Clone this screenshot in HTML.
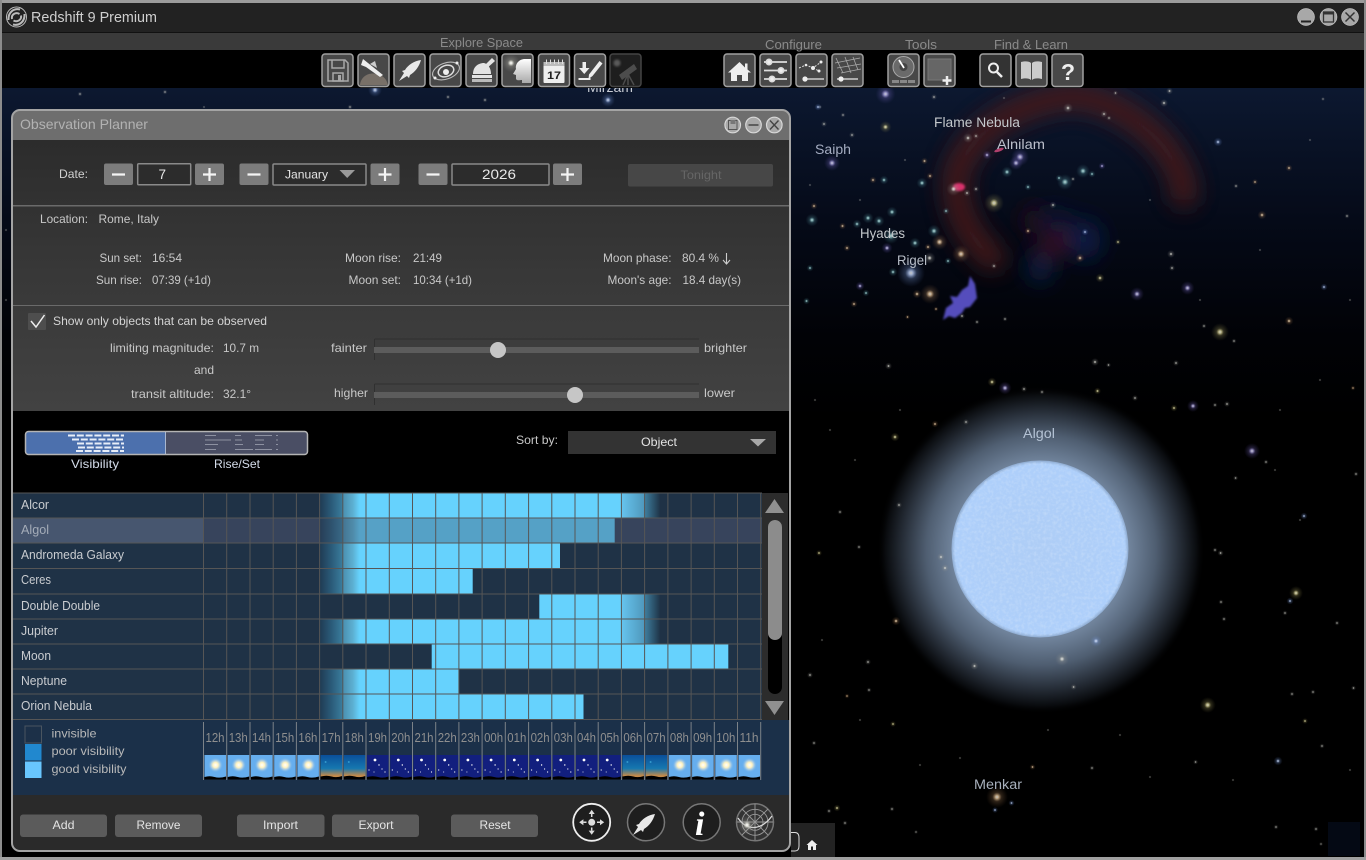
<!DOCTYPE html>
<html lang="en"><head><meta charset="utf-8"><title>Redshift 9 Premium</title>
<style>html,body{margin:0;padding:0;background:#000;width:1366px;height:860px;overflow:hidden}svg{display:block;font-family:"Liberation Sans",sans-serif;font-size:12px;filter:blur(.35px)}</style></head>
<body>
<svg width="1366" height="860" viewBox="0 0 1366 860" xmlns="http://www.w3.org/2000/svg">
<defs>
<linearGradient id="sky" x1="0" y1="88" x2="0" y2="420" gradientUnits="userSpaceOnUse"><stop offset="0" stop-color="#0c1830"/><stop offset=".4" stop-color="#050a18"/><stop offset=".75" stop-color="#010206"/><stop offset="1" stop-color="#000"/></linearGradient>
<linearGradient id="pbody" x1="0" y1="140" x2="0" y2="411" gradientUnits="userSpaceOnUse"><stop offset="0" stop-color="#2c2c2c"/><stop offset=".5" stop-color="#383838"/><stop offset="1" stop-color="#424242"/></linearGradient>
<radialGradient id="w"><stop offset="0" stop-color="#fff"/><stop offset=".14" stop-color="#dcdcd4"/><stop offset=".38" stop-color="#a8a8a0" stop-opacity=".35"/><stop offset="1" stop-color="#888" stop-opacity="0"/></radialGradient>
<radialGradient id="b"><stop offset="0" stop-color="#fff"/><stop offset=".14" stop-color="#c4d8ff"/><stop offset=".42" stop-color="#7f9fdf" stop-opacity=".35"/><stop offset="1" stop-color="#6080c0" stop-opacity="0"/></radialGradient>
<radialGradient id="y"><stop offset="0" stop-color="#fff"/><stop offset=".14" stop-color="#f4eeb0"/><stop offset=".42" stop-color="#a8a060" stop-opacity=".35"/><stop offset="1" stop-color="#807840" stop-opacity="0"/></radialGradient>
<radialGradient id="o"><stop offset="0" stop-color="#fff"/><stop offset=".14" stop-color="#f4d4a8"/><stop offset=".42" stop-color="#a87f58" stop-opacity=".35"/><stop offset="1" stop-color="#805838" stop-opacity="0"/></radialGradient>
<radialGradient id="t"><stop offset="0" stop-color="#f0ffff"/><stop offset=".14" stop-color="#a8e0e0"/><stop offset=".42" stop-color="#5f9fa8" stop-opacity=".35"/><stop offset="1" stop-color="#407880" stop-opacity="0"/></radialGradient>
<radialGradient id="p"><stop offset="0" stop-color="#fff"/><stop offset=".14" stop-color="#c8c0f8"/><stop offset=".42" stop-color="#7f70c8" stop-opacity=".35"/><stop offset="1" stop-color="#6050a8" stop-opacity="0"/></radialGradient>
<radialGradient id="halo" cx="1041" cy="550" r="164" gradientUnits="userSpaceOnUse"><stop offset="0" stop-color="#7a8da6"/><stop offset=".54" stop-color="#70839b"/><stop offset=".7" stop-color="#4f5e71"/><stop offset=".85" stop-color="#252c36"/><stop offset=".95" stop-color="#090b0e"/><stop offset="1" stop-color="#000" stop-opacity="0"/></radialGradient>
<radialGradient id="disc" cx="1040" cy="549" r="88.5" gradientUnits="userSpaceOnUse"><stop offset="0" stop-color="#aecdf6"/><stop offset=".96" stop-color="#aecffa"/><stop offset="1" stop-color="#8fabcf"/></radialGradient>
<filter id="nz" x="0" y="0" width="100%" height="100%"><feTurbulence type="fractalNoise" baseFrequency=".32" numOctaves="2" seed="4"/><feColorMatrix values="0 0 0 0 .62  0 0 0 0 .76  0 0 0 0 .96  0 0 0 2 -.8"/><feComposite in2="SourceAlpha" operator="in"/></filter>
<filter id="b12" x="-30%" y="-30%" width="160%" height="160%"><feGaussianBlur stdDeviation="11"/></filter>
<filter id="b1" x="-20%" y="-20%" width="140%" height="140%"><feGaussianBlur stdDeviation="1"/></filter>
<linearGradient id="fi" x1="319.5" y1="0" x2="366" y2="0" gradientUnits="userSpaceOnUse"><stop offset="0" stop-color="#1f3a52"/><stop offset=".25" stop-color="#2a5a78"/><stop offset=".49" stop-color="#3a7c9c"/><stop offset=".5" stop-color="#4a8eae"/><stop offset=".72" stop-color="#5cb0d2"/><stop offset=".86" stop-color="#66d2fd"/></linearGradient>
<linearGradient id="fo" x1="621.5" y1="0" x2="660" y2="0" gradientUnits="userSpaceOnUse"><stop offset="0" stop-color="#66c4ee"/><stop offset=".59" stop-color="#4f98bc"/><stop offset=".6" stop-color="#3f7f9f"/><stop offset="1" stop-color="#1f3448"/></linearGradient>
<linearGradient id="tdusk" x1="0" y1="0" x2="0" y2="1"><stop offset="0" stop-color="#0a4f9a"/><stop offset=".55" stop-color="#1678b0"/><stop offset=".85" stop-color="#c58a48"/><stop offset="1" stop-color="#c58a48"/></linearGradient>
<linearGradient id="hd" x1="0" y1="0" x2="0" y2="1"><stop offset="0" stop-color="#fff"/><stop offset="1" stop-color="#aaa"/></linearGradient>
<radialGradient id="sun"><stop offset="0" stop-color="#fff"/><stop offset=".35" stop-color="#fff3c0"/><stop offset=".6" stop-color="#dfe3d8" stop-opacity=".6"/><stop offset="1" stop-color="#6ab0ef" stop-opacity="0"/></radialGradient>
<g id="tday"><rect width="21.5" height="24.5" fill="#66aeee"/><circle cx="11" cy="10" r="7.500" fill="url(#sun)"/><path d="M0 22 Q5 20.500 10 22 T21.500 21.500V24.500H0Z" fill="#000"/></g>
<g id="tdusk2"><rect width="21.5" height="24.5" fill="url(#tdusk)"/><circle cx="5" cy="7" r="1" fill="#39c"/><path d="M0 21.500 Q6 20 11 21.500 T21.500 21V24.500H0Z" fill="#000"/></g>
<g id="tnight"><rect width="21.5" height="24.5" fill="#121f7e"/><g fill="#fff"><circle cx="8" cy="5" r="1.400"/><circle cx="12" cy="10" r=".7"/><circle cx="15" cy="14" r=".6"/><circle cx="2" cy="15" r=".6"/><circle cx="7" cy="17" r=".5"/><circle cx="18" cy="17" r=".6"/></g><path d="M0 22 Q6 20.500 11 22 T21.500 21.500V24.500H0Z" fill="#000"/></g>
<clipPath id="pc"><rect x="12" y="110" width="778" height="741" rx="8"/></clipPath>
<g id="rk"><path d="M27 6C20 7 14 11 11 16L8 17 10 19 5 27 13 22 15 24 16 21C21 18 25 13 27 6Z" fill="#e8e8e8"/></g>
</defs>

<!-- sky -->
<rect width="1366" height="860" fill="#000"/>
<rect y="88" width="1366" height="340" fill="url(#sky)"/>
<g fill="none" stroke-linecap="round" opacity=".88">
<path d="M992 258C965 235 955 205 956 180 960 145 1000 108 1065 97 1105 94 1150 125 1170 155 1180 170 1184 185 1184 195" stroke="#481a1c" stroke-width="27" filter="url(#b12)"/>
</g>
<g filter="url(#b12)">
<ellipse cx="1054" cy="245" rx="20" ry="10" fill="#3c0e1a" transform="rotate(-35 1054 245)"/>
<ellipse cx="1032" cy="220" rx="8" ry="14" fill="#2e0c14"/>
<ellipse cx="1040" cy="268" rx="12" ry="14" fill="#0a2048"/>
<ellipse cx="1085" cy="240" rx="16" ry="20" fill="#0a1c46"/>
<ellipse cx="1055" cy="222" rx="18" ry="12" fill="#091536"/>
</g>
<ellipse cx="959" cy="187" rx="6" ry="4" fill="#d8306c" filter="url(#b1)"/>
<ellipse cx="999" cy="150" rx="5" ry="1.600" fill="#b0406c" transform="rotate(-20 999 150)"/>
<path d="M970 276 975 284 977 298 970 307 965 308 962 313 955 318 949 316 943 320 946 308 953 303 950 296 957 297 962 290 968 286Z" fill="#554dbc" filter="url(#b1)"/>

<!-- Algol -->
<circle cx="1041" cy="550" r="164" fill="url(#halo)"/>
<circle cx="1040" cy="549" r="88.500" fill="url(#disc)"/>
<circle cx="1040" cy="549" r="87" fill="#000" filter="url(#nz)" opacity=".5"/>

<!-- stars -->
<g opacity=".78">
<g fill="url(#w)">
<circle cx="968" cy="138" r="5"/><circle cx="976" cy="136" r="3"/><circle cx="1068" cy="108" r="5"/><circle cx="1104" cy="114" r="3.500"/><circle cx="1109" cy="118" r="2.500"/><circle cx="1164" cy="103" r="4"/><circle cx="1236" cy="186" r="2.500"/><circle cx="1347" cy="216" r="2.500"/><circle cx="953.500" cy="189" r="7"/><circle cx="967" cy="193" r="3.500"/><circle cx="976" cy="189" r="3"/><circle cx="929.600" cy="258" r="6"/><circle cx="962" cy="316" r="3"/><circle cx="977" cy="322" r="2.500"/><circle cx="1005" cy="319" r="2.500"/><circle cx="1171" cy="254" r="4"/><circle cx="1172" cy="268" r="3"/><circle cx="1234" cy="341" r="2.500"/><circle cx="1204" cy="326" r="2.500"/><circle cx="843" cy="115" r="2.500"/><circle cx="824" cy="124" r="3"/><circle cx="852" cy="135" r="3"/><circle cx="934" cy="97" r="3"/><circle cx="1115.500" cy="93" r="2.500"/><circle cx="1169.500" cy="91" r="3.500"/><circle cx="1323" cy="99" r="2"/><circle cx="994" cy="266" r="3"/><circle cx="1053" cy="205" r="3.500"/><circle cx="1073" cy="179" r="2.500"/><circle cx="888.500" cy="366" r="3.500"/><circle cx="1095" cy="362" r="4"/><circle cx="1108.500" cy="365" r="2.500"/><circle cx="1176" cy="363" r="3"/><circle cx="1024" cy="389" r="3"/><circle cx="1042" cy="392" r="2.500"/><circle cx="1227" cy="404" r="3"/><circle cx="1215" cy="405" r="2.500"/><circle cx="1135" cy="398" r="3"/><circle cx="966" cy="422" r="3"/><circle cx="1266" cy="462" r="2.500"/><circle cx="1235.600" cy="478" r="2.500"/><circle cx="1356" cy="474" r="2.500"/><circle cx="840" cy="512" r="2.500"/><circle cx="899" cy="505" r="3"/><circle cx="859" cy="547" r="2.500"/><circle cx="941" cy="557" r="4"/><circle cx="945" cy="568" r="4"/><circle cx="1215" cy="550" r="2.500"/><circle cx="1220.600" cy="553" r="3"/><circle cx="1221" cy="602" r="2.500"/><circle cx="1285" cy="613" r="2.500"/><circle cx="1224" cy="619" r="2.500"/><circle cx="1337" cy="623" r="2.500"/><circle cx="1062" cy="659" r="7"/><circle cx="974.500" cy="666" r="4"/><circle cx="1073.600" cy="687" r="3"/><circle cx="810" cy="675" r="3"/><circle cx="868" cy="662" r="3"/><circle cx="869" cy="690" r="2.500"/><circle cx="1292" cy="694" r="2.500"/><circle cx="1313" cy="692" r="2.500"/><circle cx="1353.500" cy="688" r="2.500"/><circle cx="814" cy="743" r="2.500"/><circle cx="1092" cy="768" r="2.500"/><circle cx="1195.600" cy="762" r="2.500"/><circle cx="1322" cy="746" r="2.500"/><circle cx="892" cy="809" r="2.500"/><circle cx="829" cy="811" r="2.500"/><circle cx="845" cy="823" r="2.500"/><circle cx="916" cy="832" r="2"/><circle cx="1276" cy="827" r="2.500"/><circle cx="1316" cy="829" r="2.500"/><circle cx="1321" cy="844" r="2"/>
<circle cx="830" cy="430" r="1.500"/><circle cx="815" cy="400" r="1.500"/><circle cx="855" cy="460" r="1.500"/><circle cx="900" cy="410" r="1.500"/><circle cx="822" cy="640" r="1.500"/><circle cx="860" cy="720" r="1.500"/><circle cx="920" cy="765" r="1.500"/><circle cx="960" cy="758" r="1.500"/><circle cx="1048" cy="730" r="1.500"/><circle cx="1120" cy="735" r="1.500"/><circle cx="1150" cy="777" r="1.500"/><circle cx="1233" cy="780" r="1.500"/><circle cx="1350" cy="770" r="1.500"/><circle cx="1300" cy="520" r="1.500"/><circle cx="1275" cy="470" r="1.500"/><circle cx="1320" cy="380" r="1.500"/><circle cx="1280" cy="410" r="1.500"/><circle cx="1200" cy="300" r="1.500"/><circle cx="1260" cy="250" r="1.500"/><circle cx="1310" cy="140" r="1.500"/><circle cx="1350" cy="300" r="1.500"/><circle cx="1150" cy="200" r="1.500"/><circle cx="810" cy="185" r="1.500"/><circle cx="860" cy="200" r="1.500"/><circle cx="905" cy="160" r="1.500"/><circle cx="6" cy="300" r="1.500"/><circle cx="6" cy="230" r="1.500"/><circle cx="80" cy="94" r="2.500"/><circle cx="165" cy="92" r="2.500"/><circle cx="448" cy="97" r="2.500"/><circle cx="485" cy="100" r="2.500"/><circle cx="350" cy="107" r="2.500"/><circle cx="204" cy="107" r="1.500"/><circle cx="1004" cy="98" r="1.500"/><circle cx="820" cy="107" r="2"/>
</g>
<g fill="url(#b)">
<circle cx="911" cy="273" r="14"/><circle cx="1218" cy="142" r="4.500"/><circle cx="1085" cy="232" r="3.500"/><circle cx="1324" cy="287" r="3.500"/><circle cx="818" cy="107" r="3.500"/><circle cx="1290" cy="601" r="3.500"/><circle cx="1096" cy="641" r="6"/><circle cx="1278" cy="761" r="4.500"/><circle cx="1011.500" cy="803" r="3"/><circle cx="995" cy="810" r="3"/><circle cx="608" cy="100" r="7"/><circle cx="375" cy="90" r="7"/><circle cx="1304" cy="516" r="3.500"/>
</g>
<g fill="url(#y)">
<circle cx="885.500" cy="127" r="6"/><circle cx="994" cy="203" r="10"/><circle cx="1100" cy="278" r="4.500"/><circle cx="1118" cy="242" r="3"/><circle cx="1220" cy="332" r="9"/><circle cx="992" cy="382" r="4.500"/><circle cx="1097.500" cy="391" r="3.500"/><circle cx="1174" cy="408" r="3.500"/><circle cx="895" cy="437" r="4.500"/><circle cx="819" cy="553" r="3"/><circle cx="1296" cy="593" r="7"/><circle cx="1207.700" cy="705" r="8"/><circle cx="1305" cy="721" r="3"/><circle cx="893" cy="724" r="3"/><circle cx="837" cy="808" r="3.500"/>
</g>
<g fill="url(#o)">
<circle cx="1289" cy="168" r="3.500"/><circle cx="1255" cy="182" r="3"/><circle cx="1262" cy="215" r="4.500"/><circle cx="930" cy="176" r="3.500"/><circle cx="924.500" cy="161" r="3.500"/><circle cx="873" cy="180" r="3.500"/><circle cx="814" cy="206" r="3.500"/><circle cx="842.500" cy="226" r="3.500"/><circle cx="939.500" cy="242" r="8"/><circle cx="847" cy="248" r="3.500"/><circle cx="928" cy="247" r="3.500"/><circle cx="961" cy="254" r="9"/><circle cx="917" cy="294" r="4.500"/><circle cx="930" cy="294" r="10"/><circle cx="854" cy="304" r="3.500"/><circle cx="907.500" cy="317" r="2.500"/><circle cx="936" cy="309" r="2.500"/><circle cx="1028" cy="231" r="3.500"/><circle cx="1080" cy="258" r="4.500"/><circle cx="1289" cy="321" r="4.500"/><circle cx="1353" cy="388" r="2.500"/><circle cx="935" cy="424" r="3.500"/><circle cx="896" cy="621" r="4.500"/><circle cx="847" cy="696" r="2.500"/><circle cx="1032.500" cy="767" r="3"/><circle cx="997" cy="797" r="11"/>
</g>
<g fill="url(#t)">
<circle cx="1007" cy="172" r="5.500"/><circle cx="1083" cy="171" r="7"/><circle cx="1065" cy="182" r="8"/><circle cx="1059" cy="178" r="3.500"/><circle cx="1092" cy="174" r="3.500"/><circle cx="922" cy="183" r="5.500"/><circle cx="884" cy="180" r="4.500"/><circle cx="946" cy="211" r="3.500"/><circle cx="892" cy="212" r="5.500"/><circle cx="868" cy="218" r="5.500"/><circle cx="879" cy="221" r="5.500"/><circle cx="857" cy="224" r="4.500"/><circle cx="812" cy="220" r="6.500"/><circle cx="934" cy="231" r="6.500"/><circle cx="891" cy="236" r="8"/><circle cx="915" cy="243" r="5.500"/><circle cx="948" cy="261" r="3.500"/><circle cx="893" cy="272" r="4.500"/><circle cx="810" cy="268" r="3.500"/><circle cx="866" cy="293" r="3.500"/><circle cx="806.500" cy="301" r="3.500"/><circle cx="1028" cy="187" r="3.500"/>
</g>
<g fill="url(#p)">
<circle cx="885.500" cy="94" r="10"/><circle cx="832" cy="163" r="8"/><circle cx="987" cy="155" r="4.500"/><circle cx="1020" cy="157" r="9"/><circle cx="1016" cy="163" r="7"/><circle cx="1102" cy="166" r="3.500"/><circle cx="887" cy="248" r="5.500"/><circle cx="860" cy="286" r="4.500"/><circle cx="1137" cy="294" r="7"/><circle cx="1187.500" cy="288" r="7"/><circle cx="1005" cy="388" r="6.500"/><circle cx="1193" cy="406" r="6"/><circle cx="1252" cy="451" r="8"/>
</g>
</g>

<!-- sky labels -->
<g font-size="13.500" fill="#b8bfca">
<text x="587" y="92" textLength="46" lengthAdjust="spacingAndGlyphs" fill="#c8ccd4">Mirzam</text>
<text x="815" y="154" textLength="36" lengthAdjust="spacingAndGlyphs" fill="#a4acc0">Saiph</text>
<text x="934" y="127" textLength="86" lengthAdjust="spacingAndGlyphs" fill="#c4c8cc">Flame Nebula</text>
<text x="997" y="149" textLength="48" lengthAdjust="spacingAndGlyphs" fill="#bcc0cc">Alnilam</text>
<text x="860" y="238" textLength="45" lengthAdjust="spacingAndGlyphs" fill="#c4c8cc">Hyades</text>
<text x="897" y="265" textLength="30" lengthAdjust="spacingAndGlyphs" fill="#b8bec8">Rigel</text>
<text x="1023" y="438" textLength="32" lengthAdjust="spacingAndGlyphs" fill="#b4c2d4">Algol</text>
<text x="974" y="789" textLength="48" lengthAdjust="spacingAndGlyphs" fill="#a8b0bc">Menkar</text>
</g>

<!-- bottom-side bits -->
<rect x="791" y="823" width="44" height="34" fill="#232323"/>
<rect x="1328" y="822" width="32" height="34" fill="#040914"/>
<path d="M791 832.500H795Q799 832.500 799 838V846Q799 851 795 851H791" fill="none" stroke="#ddd" stroke-width="1"/>
<path d="M812 840 806.500 845H808V850H811V846.500H813V850H816V845H817.500Z" fill="#eee"/>

<!-- window chrome -->
<rect width="1366" height="3" fill="#9c9c9c"/>
<rect y="3" width="1366" height="30" fill="#222"/>
<rect y="32" width="1366" height="1" fill="#111"/>
<rect y="33" width="1366" height="17" fill="#3a3a3a"/>
<rect y="50" width="1366" height="38" fill="#000"/>
<rect x="0" width="2" height="860" fill="#8c8c8c"/>
<rect x="1364" width="2" height="860" fill="#8c8c8c"/>
<rect y="857" width="1366" height="3" fill="#a0a0a0"/>
<!-- logo -->
<g fill="none" stroke="#bbb">
<circle cx="16.500" cy="17" r="10" stroke-width="1"/>
<path d="M8.500 20C8 12 14 8 20 9.500M24.500 14C25 22 19 26 13 24.500M12 19C11 14 16 12 19.500 14M21 15.500C22 20 17 22.500 13.500 20.500" stroke-width="2"/>
</g>
<text x="31" y="22" font-size="15" fill="#cfcfcf" textLength="126" lengthAdjust="spacingAndGlyphs">Redshift 9 Premium</text>
<g fill="#a8a8a8" stroke="#ddd" stroke-width=".5">
<circle cx="1306" cy="17" r="8.500"/><circle cx="1328.500" cy="17" r="8.500"/><circle cx="1350" cy="17" r="8.500"/></g>
<path d="M1301 21.500H1311" stroke="#222" stroke-width="2"/>
<rect x="1323.500" y="12" width="10" height="10" fill="none" stroke="#333" stroke-width="1.300"/><path d="M1323.500 13.500H1333.500" stroke="#333" stroke-width="2"/>
<path d="M1345.500 12.500 1354.500 21.500M1354.500 12.500 1345.500 21.500" stroke="#333" stroke-width="1.500"/>

<g font-size="12.500" fill="#8a8a8a">
<text x="440" y="47" textLength="83" lengthAdjust="spacingAndGlyphs">Explore Space</text>
<text x="765" y="49" textLength="57" lengthAdjust="spacingAndGlyphs">Configure</text>
<text x="905" y="49" textLength="32" lengthAdjust="spacingAndGlyphs">Tools</text>
<text x="994" y="49" textLength="74" lengthAdjust="spacingAndGlyphs">Find &amp; Learn</text>
</g>

<!-- toolbar buttons -->
<g fill="#484848" stroke="#a0a0a0" stroke-width="1.500">
<rect x="322" y="54" width="31" height="32.500" rx="3"/><rect x="358" y="54" width="31" height="32.500" rx="3"/><rect x="394" y="54" width="31" height="32.500" rx="3"/><rect x="430" y="54" width="31" height="32.500" rx="3"/><rect x="466" y="54" width="31" height="32.500" rx="3"/><rect x="502" y="54" width="31" height="32.500" rx="3"/><rect x="538.500" y="54" width="31" height="32.500" rx="3"/><rect x="574.500" y="54" width="31" height="32.500" rx="3"/>
<rect x="610" y="54" width="31" height="32.500" rx="3" fill="#1e1e1e" stroke="#444"/>
<rect x="724" y="54" width="31" height="32.500" rx="3"/><rect x="760" y="54" width="31" height="32.500" rx="3"/><rect x="796" y="54" width="31" height="32.500" rx="3"/><rect x="832" y="54" width="31" height="32.500" rx="3"/>
<rect x="888" y="54" width="31" height="32.500" rx="3"/><rect x="924" y="54" width="31" height="32.500" rx="3"/>
<rect x="980" y="54" width="31" height="32.500" rx="3" fill="#333"/><rect x="1016" y="54" width="31" height="32.500" rx="3"/><rect x="1052" y="54" width="31" height="32.500" rx="3"/>
</g>
<!-- floppy -->
<g transform="translate(322 54)" fill="none" stroke="#a8a8a8" stroke-width="1.500"><path d="M6 6H23L26 9V27H6Z"/><path d="M10 6V14H22V6"/><rect x="11" y="19" width="10" height="8"/><rect x="16" y="21" width="3" height="6" fill="#a8a8a8" stroke="none"/></g>
<!-- shuttle over earth -->
<g transform="translate(358 54)"><path d="M2 31C3 21 13 17 22 21 27 23 29 27 30 31Z" fill="#787068"/><path d="M5 5 25 21 22 23 8 13 3 11Z" fill="#eee"/><path d="M12 10 17 7 19 14Z" fill="#ccc"/></g>
<!-- rocket -->
<use href="#rk" transform="translate(394 54)"/>
<!-- orbit -->
<g transform="translate(430 54)" fill="none" stroke="#bbb"><ellipse cx="16" cy="17" rx="14" ry="8" transform="rotate(-20 16 17)" stroke-width="1.100"/><ellipse cx="16" cy="17" rx="8" ry="5.500" transform="rotate(-20 16 17)" stroke-width="1.500" stroke="#ddd"/><circle cx="16" cy="18" r="3" fill="#eee" stroke="none"/><circle cx="27" cy="9" r="1.500" fill="#eee" stroke="none"/><circle cx="5" cy="24" r="1.500" fill="#eee" stroke="none"/></g>
<!-- observatory -->
<g transform="translate(466 54)" fill="#e4e4e4"><path d="M7 20C7 12 13 9 18 9 22 10 25 14 25 20Z"/><path d="M17 13 26 4 29 7 20 15Z"/><rect x="6" y="21" width="20" height="3"/><rect x="6" y="25" width="20" height="3" fill="#bbb"/></g>
<!-- head -->
<g transform="translate(502 54)"><circle cx="9" cy="9" r="9" fill="url(#w)"/><path d="M29 29V5H23C17 5 13 10 14 15L11 20 14 21 14 25C15 27 18 26 20 26L20 29Z" fill="url(#hd)"/></g>
<!-- calendar -->
<g transform="translate(538.500 54)"><rect x="5" y="8" width="21" height="21" rx="1" fill="#eee"/><rect x="5" y="8" width="21" height="4" fill="#bbb"/><path d="M8 5.500V10M12 5.500V10M16 5.500V10M20 5.500V10M24 5.500V10" stroke="#ddd"/><text x="8.500" y="25" font-size="11" font-weight="bold" fill="#222" textLength="14" lengthAdjust="spacingAndGlyphs">17</text></g>
<!-- download pencil -->
<g transform="translate(574.500 54)" fill="#eee"><path d="M8 8H11.500V14H15L9.750 20 4.500 14H8Z"/><rect x="4" y="24" width="12" height="2"/><path d="M25 7 28 9.500 18 22 14 25 14.500 20.500Z"/></g>
<!-- telescope dim -->
<g transform="translate(610 54)"><circle cx="7" cy="9" r="3.500" fill="#5a5a5a" filter="url(#b1)"/><path d="M9 21 24 10 27 15 12 26Z" fill="#4c4c4c"/><path d="M18 20 13 31M18 20 18 31M18 20 24 31" stroke="#4c4c4c" stroke-width="1.500"/></g>
<!-- home -->
<path d="M739.500 62 728 72.500H731V81H737V75H742V81H748V72.500H751L747.500 69.500V63.500H745V67.500Z" fill="#eee"/>
<!-- sliders -->
<g stroke="#ddd" stroke-width="1.800" fill="#eee"><path d="M764 62H787M764 70.500H787M764 79H787"/><circle cx="769" cy="62" r="2.600"/><circle cx="781" cy="70.500" r="2.600"/><circle cx="772" cy="79" r="2.600"/></g>
<!-- constellation -->
<g fill="#eee"><path d="M799 68 806 65 813 68 821 62M813 68 819 71" stroke="#ddd" stroke-dasharray="2 1.500" fill="none"/><circle cx="806" cy="65" r="1.300"/><circle cx="813" cy="68" r="2"/><circle cx="821" cy="62" r="1.500"/><circle cx="819" cy="71" r="1.500"/><path d="M803 79H824" stroke="#bbb" stroke-width="1.800"/><circle cx="805" cy="79" r="2.600"/></g>
<!-- grid -->
<g fill="none" stroke="#aaa" stroke-width=".8"><path d="M836 58 843 73M845 57 851 73M853 57 858 70M835 63 860 58M837 68 861 64M841 73 861 69"/><path d="M837 79H858" stroke="#bbb" stroke-width="1.800"/><circle cx="841" cy="79" r="2.600" fill="#eee" stroke="none"/></g>
<!-- gauge -->
<g><circle cx="903.500" cy="67" r="10.500" fill="#6a6a6a" stroke="#aaa"/><circle cx="903.500" cy="67" r="4" fill="#444"/><path d="M899 60 904 68" stroke="#fff" stroke-width="1.800"/><rect x="892" y="80" width="7" height="3" fill="#888"/><rect x="900" y="80" width="7" height="3" fill="#888"/><rect x="908" y="80" width="7" height="3" fill="#888"/></g>
<!-- screen plus -->
<rect x="928" y="59" width="23" height="21" fill="#666" stroke="#777"/><path d="M947 76V85M942.500 80.500H951.500" stroke="#eee" stroke-width="2.500"/>
<!-- search -->
<circle cx="993.500" cy="68" r="4.500" fill="none" stroke="#eee" stroke-width="2"/><path d="M997 72 1002 77" stroke="#eee" stroke-width="2.500"/>
<!-- book -->
<path d="M1021 62C1025 61 1029 61 1031 63V80C1029 78 1025 78 1021 79ZM1042 62C1038 61 1034 61 1032 63V80C1034 78 1038 78 1042 79Z" fill="#ccc"/>
<text x="1061" y="80" font-size="23" font-weight="bold" fill="#eee">?</text>

<!-- planner -->
<g clip-path="url(#pc)">
<rect x="12" y="110" width="778" height="30" fill="#6e6e6e"/>
<rect x="12" y="140" width="778" height="271" fill="url(#pbody)"/>
<rect x="12" y="205" width="778" height="1.500" fill="#6a6a6a"/>
<rect x="12" y="305" width="778" height="1" fill="#6a6a6a"/>
<rect x="12" y="411" width="778" height="82" fill="#000"/>
<rect x="12" y="720" width="778" height="75" fill="#1b3049"/>
<rect x="12" y="795" width="778" height="56" fill="#2a2a2a"/>

<!-- grid -->
<rect x="12" y="493" width="750" height="227" fill="#1f3246"/>
<rect x="12" y="518" width="192" height="25" fill="#47566f"/>
<rect x="204" y="518" width="558" height="25" fill="#37445c"/>
<g fill="#66d2fd">
<rect x="319.500" y="493" width="47" height="25" fill="url(#fi)"/><rect x="366" y="493" width="256" height="25"/><rect x="621.500" y="493" width="38.500" height="25" fill="url(#fo)"/>
<g opacity=".66"><rect x="319.500" y="518" width="47" height="25" fill="url(#fi)"/><rect x="366" y="518" width="248.700" height="25"/></g>
<rect x="319.500" y="543" width="47" height="25.500" fill="url(#fi)"/><rect x="366" y="543" width="194" height="25.500"/>
<rect x="319.500" y="568.500" width="47" height="25.500" fill="url(#fi)"/><rect x="366" y="568.500" width="106.700" height="25.500"/>
<rect x="539.300" y="594" width="82.700" height="25"/><rect x="621.500" y="594" width="38.500" height="25" fill="url(#fo)"/>
<rect x="319.500" y="619" width="47" height="25" fill="url(#fi)"/><rect x="366" y="619" width="256" height="25"/><rect x="621.500" y="619" width="38.500" height="25" fill="url(#fo)"/>
<rect x="431.700" y="644" width="296.600" height="25"/>
<rect x="319.500" y="669" width="47" height="25" fill="url(#fi)"/><rect x="366" y="669" width="93" height="25"/>
<rect x="319.500" y="694" width="47" height="25.500" fill="url(#fi)"/><rect x="366" y="694" width="217.500" height="25.500"/>
</g>
<path d="M12 493H762M12 518H762M12 543H762M12 568.500H762M12 594H762M12 619H762M12 644H762M12 669H762M12 694H762M12 719.500H762" stroke="#565656" stroke-width="1" fill="none"/>
<path d="M203.500 493V720M226.700 493V720M250 493V720M273.200 493V720M296.400 493V720M319.600 493V720M342.800 493V720M366 493V720M389.300 493V720M412.500 493V720M435.700 493V720M458.900 493V720M482.100 493V720M505.300 493V720M528.600 493V720M551.800 493V720M575 493V720M598.200 493V720M621.400 493V720M644.600 493V720M667.900 493V720M691.100 493V720M714.300 493V720M737.500 493V720M760.700 493V720" stroke="#565656" stroke-width="1" fill="none"/>
<g font-size="12.500" fill="#c9ccd0">
<text x="21" y="509" textLength="28" lengthAdjust="spacingAndGlyphs">Alcor</text>
<text x="21" y="534" textLength="28" lengthAdjust="spacingAndGlyphs" fill="#a4acb8">Algol</text>
<text x="21" y="559" textLength="103" lengthAdjust="spacingAndGlyphs">Andromeda Galaxy</text>
<text x="21" y="584" textLength="30" lengthAdjust="spacingAndGlyphs">Ceres</text>
<text x="21" y="610" textLength="79" lengthAdjust="spacingAndGlyphs">Double Double</text>
<text x="21" y="635" textLength="37" lengthAdjust="spacingAndGlyphs">Jupiter</text>
<text x="21" y="660" textLength="30" lengthAdjust="spacingAndGlyphs">Moon</text>
<text x="21" y="685" textLength="46" lengthAdjust="spacingAndGlyphs">Neptune</text>
<text x="21" y="710" textLength="71" lengthAdjust="spacingAndGlyphs">Orion Nebula</text>
</g>

<!-- scrollbar -->
<rect x="762" y="493" width="26" height="227" fill="#2c2c2c"/>
<path d="M774.500 499 784 513H765Z" fill="#909090"/>
<path d="M774.500 715 784 701H765Z" fill="#909090"/>
<rect x="768" y="520" width="14" height="174" rx="7" fill="#000"/>
<rect x="768" y="520" width="14" height="120" rx="7" fill="#8c8c8c"/>

<!-- legend -->
<rect x="25" y="726" width="16.500" height="17" fill="#1c3048" stroke="#4a5560"/>
<rect x="25" y="744" width="16.500" height="16.500" fill="#2188cf"/>
<rect x="25" y="761.500" width="16.500" height="16.500" fill="#68c6fe"/>
<g font-size="12" fill="#b9b9b9">
<text x="51.500" y="737.500" textLength="45" lengthAdjust="spacingAndGlyphs">invisible</text>
<text x="51.500" y="755" textLength="73" lengthAdjust="spacingAndGlyphs">poor visibility</text>
<text x="51.500" y="773" textLength="75" lengthAdjust="spacingAndGlyphs">good visibility</text>
</g>
<path d="M203.500 722V780M226.700 722V780M250 722V780M273.200 722V780M296.400 722V780M319.600 722V780M342.800 722V780M366 722V780M389.300 722V780M412.500 722V780M435.700 722V780M458.900 722V780M482.100 722V780M505.300 722V780M528.600 722V780M551.800 722V780M575 722V780M598.200 722V780M621.400 722V780M644.600 722V780M667.900 722V780M691.100 722V780M714.300 722V780M737.500 722V780M760.700 722V780" stroke="#7c8288" stroke-width="1" fill="none"/>
<g font-size="12.500" fill="#8f8f8f">
<text x="205.500" y="742" textLength="19" lengthAdjust="spacingAndGlyphs">12h</text><text x="228.700" y="742" textLength="19" lengthAdjust="spacingAndGlyphs">13h</text><text x="252" y="742" textLength="19" lengthAdjust="spacingAndGlyphs">14h</text><text x="275.200" y="742" textLength="19" lengthAdjust="spacingAndGlyphs">15h</text><text x="298.400" y="742" textLength="19" lengthAdjust="spacingAndGlyphs">16h</text><text x="321.600" y="742" textLength="19" lengthAdjust="spacingAndGlyphs">17h</text><text x="344.800" y="742" textLength="19" lengthAdjust="spacingAndGlyphs">18h</text><text x="368" y="742" textLength="19" lengthAdjust="spacingAndGlyphs">19h</text><text x="391.300" y="742" textLength="19" lengthAdjust="spacingAndGlyphs">20h</text><text x="414.500" y="742" textLength="19" lengthAdjust="spacingAndGlyphs">21h</text><text x="437.700" y="742" textLength="19" lengthAdjust="spacingAndGlyphs">22h</text><text x="460.900" y="742" textLength="19" lengthAdjust="spacingAndGlyphs">23h</text><text x="484.100" y="742" textLength="19" lengthAdjust="spacingAndGlyphs">00h</text><text x="507.300" y="742" textLength="19" lengthAdjust="spacingAndGlyphs">01h</text><text x="530.600" y="742" textLength="19" lengthAdjust="spacingAndGlyphs">02h</text><text x="553.800" y="742" textLength="19" lengthAdjust="spacingAndGlyphs">03h</text><text x="577" y="742" textLength="19" lengthAdjust="spacingAndGlyphs">04h</text><text x="600.200" y="742" textLength="19" lengthAdjust="spacingAndGlyphs">05h</text><text x="623.400" y="742" textLength="19" lengthAdjust="spacingAndGlyphs">06h</text><text x="646.600" y="742" textLength="19" lengthAdjust="spacingAndGlyphs">07h</text><text x="669.900" y="742" textLength="19" lengthAdjust="spacingAndGlyphs">08h</text><text x="693.100" y="742" textLength="19" lengthAdjust="spacingAndGlyphs">09h</text><text x="716.300" y="742" textLength="19" lengthAdjust="spacingAndGlyphs">10h</text><text x="739.500" y="742" textLength="19" lengthAdjust="spacingAndGlyphs">11h</text>
</g>
<use href="#tday" x="204.500" y="755"/><use href="#tday" x="227.700" y="755"/><use href="#tday" x="251" y="755"/><use href="#tday" x="274.200" y="755"/><use href="#tday" x="297.400" y="755"/>
<use href="#tdusk2" x="320.600" y="755"/><use href="#tdusk2" x="343.800" y="755"/>
<use href="#tnight" x="367" y="755"/><use href="#tnight" x="390.300" y="755"/><use href="#tnight" x="413.500" y="755"/><use href="#tnight" x="436.700" y="755"/><use href="#tnight" x="459.900" y="755"/><use href="#tnight" x="483.100" y="755"/><use href="#tnight" x="506.300" y="755"/><use href="#tnight" x="529.600" y="755"/><use href="#tnight" x="552.800" y="755"/><use href="#tnight" x="576" y="755"/><use href="#tnight" x="599.200" y="755"/>
<use href="#tdusk2" x="622.400" y="755"/><use href="#tdusk2" x="645.600" y="755"/>
<use href="#tday" x="668.900" y="755"/><use href="#tday" x="692.100" y="755"/><use href="#tday" x="715.300" y="755"/><use href="#tday" x="738.500" y="755"/>

<!-- bottom buttons -->
<g fill="#5b5b5b">
<rect x="20" y="814.500" width="87" height="22.500" rx="3"/><rect x="115" y="814.500" width="87" height="22.500" rx="3"/><rect x="237" y="814.500" width="87.500" height="22.500" rx="3"/><rect x="332" y="814.500" width="87" height="22.500" rx="3"/><rect x="451" y="814.500" width="87" height="22.500" rx="3"/>
</g>
<g font-size="12" fill="#e4e4e4">
<text x="52.500" y="829" textLength="22" lengthAdjust="spacingAndGlyphs">Add</text>
<text x="136.500" y="829" textLength="44" lengthAdjust="spacingAndGlyphs">Remove</text>
<text x="263" y="829" textLength="35" lengthAdjust="spacingAndGlyphs">Import</text>
<text x="358.500" y="829" textLength="35" lengthAdjust="spacingAndGlyphs">Export</text>
<text x="479.500" y="829" textLength="31" lengthAdjust="spacingAndGlyphs">Reset</text>
</g>
<circle cx="591.700" cy="822.300" r="18.500" fill="#1e1e1e" stroke="#eee" stroke-width="1.800"/>
<circle cx="646" cy="822.300" r="18.500" fill="#1e1e1e" stroke="#777" stroke-width="1.500"/>
<circle cx="701.700" cy="822.300" r="18.500" fill="#1e1e1e" stroke="#777" stroke-width="1.500"/>
<circle cx="755" cy="822.300" r="18.500" fill="#333" stroke="#777" stroke-width="1.500"/>
<g fill="#ddd"><circle cx="591.700" cy="822.300" r="3.500"/><path d="M591.700 809.800 588.700 814H594.700ZM591.700 834.800 588.700 830.600H594.700ZM579.200 822.300 583.400 819.300V825.300ZM604.200 822.300 600 819.300V825.300Z"/><path d="M591.700 814V817M591.700 827.500V830.600M583.400 822.300H586.500M597 822.300H600" stroke="#ddd" stroke-width="1.500"/></g>
<use href="#rk" transform="translate(628 808)"/>
<text x="695" y="835" font-family="Liberation Serif,serif" font-size="34" font-style="italic" font-weight="bold" fill="#fff">i</text>
<g fill="none" stroke="#999" stroke-width=".9"><circle cx="755" cy="822.300" r="13"/><circle cx="755" cy="822.300" r="8"/><path d="M755 804V840M737 822H773M742 809 768 835M768 809 742 835"/></g>
<path d="M738 818C746 830 760 832 772 816" fill="none" stroke="#ddd" stroke-width="1.200"/>
<circle cx="747" cy="825" r="10" fill="url(#w)"/>

<!-- title text -->
<text x="20" y="129" font-size="14" fill="#b2b2b2" textLength="128" lengthAdjust="spacingAndGlyphs">Observation Planner</text>
<g fill="#a8a8a8" stroke="#d8d8d8" stroke-width="1.200">
<circle cx="732.700" cy="125" r="7.800"/><circle cx="753.500" cy="125" r="7.800"/><circle cx="774.300" cy="125" r="7.800"/></g>
<rect x="728.500" y="120.500" width="8.500" height="9" fill="none" stroke="#555"/><rect x="730.500" y="120" width="5" height="4" fill="#777"/>
<path d="M748.500 125H758.500" stroke="#444" stroke-width="1.600"/>
<path d="M770 120.500 778.500 129.500M778.500 120.500 770 129.500" stroke="#444" stroke-width="1.400"/>

<!-- date row -->
<text x="59" y="178" textLength="29" lengthAdjust="spacingAndGlyphs" fill="#d0d0d0">Date:</text>
<g fill="#7c7c7c">
<rect x="104" y="163.500" width="29" height="21.500" rx="2"/><rect x="195" y="163.500" width="29" height="21.500" rx="2"/><rect x="239.500" y="163.500" width="29" height="21.500" rx="2"/><rect x="370.500" y="163.500" width="29" height="21.500" rx="2"/><rect x="418.500" y="163.500" width="29" height="21.500" rx="2"/><rect x="553" y="163.500" width="29" height="21.500" rx="2"/>
</g>
<path d="M112 174.500H125M203 174.500H216M247.500 174.500H260.500M378.500 174.500H391.500M426.500 174.500H439.500M561 174.500H574" stroke="#f4f4f4" stroke-width="2.200"/>
<path d="M209.500 168V181M385 168V181M567.500 168V181" stroke="#f4f4f4" stroke-width="2.200"/>
<g fill="#2c2c2c" stroke="#8a8a8a" stroke-width="1.500">
<rect x="137.700" y="163.700" width="53" height="21" rx="1"/><rect x="273" y="164" width="93" height="21" rx="1"/><rect x="452" y="164" width="97" height="21" rx="1"/>
</g>
<text x="158.500" y="179" font-size="13.500" fill="#e8e8e8">7</text>
<text x="285" y="178.500" textLength="43" lengthAdjust="spacingAndGlyphs" fill="#e4e4e4">January</text>
<path d="M339.500 170H355L347.200 178Z" fill="#9a9a9a"/>
<text x="482" y="179" font-size="13.500" textLength="34" lengthAdjust="spacingAndGlyphs" fill="#e8e8e8">2026</text>
<rect x="628" y="164" width="145" height="22.500" rx="2" fill="#474747"/>
<text x="680.500" y="179" textLength="41" lengthAdjust="spacingAndGlyphs" fill="#666">Tonight</text>

<!-- info -->
<g fill="#c8c8c8">
<text x="40" y="223" textLength="48" lengthAdjust="spacingAndGlyphs">Location:</text>
<text x="98.500" y="223" textLength="60.500" lengthAdjust="spacingAndGlyphs">Rome, Italy</text>
<text x="99.500" y="262" textLength="42.500" lengthAdjust="spacingAndGlyphs">Sun set:</text>
<text x="152" y="262" textLength="30" lengthAdjust="spacingAndGlyphs">16:54</text>
<text x="96" y="284" textLength="46" lengthAdjust="spacingAndGlyphs">Sun rise:</text>
<text x="152" y="284" textLength="59" lengthAdjust="spacingAndGlyphs">07:39 (+1d)</text>
<text x="345" y="262" textLength="56" lengthAdjust="spacingAndGlyphs">Moon rise:</text>
<text x="413" y="262" textLength="29" lengthAdjust="spacingAndGlyphs">21:49</text>
<text x="348.500" y="284" textLength="52.500" lengthAdjust="spacingAndGlyphs">Moon set:</text>
<text x="413" y="284" textLength="59" lengthAdjust="spacingAndGlyphs">10:34 (+1d)</text>
<text x="603" y="262" textLength="68.500" lengthAdjust="spacingAndGlyphs">Moon phase:</text>
<text x="682" y="262" textLength="37" lengthAdjust="spacingAndGlyphs">80.4 %</text>
<text x="607.500" y="284" textLength="64" lengthAdjust="spacingAndGlyphs">Moon's age:</text>
<text x="682.500" y="284" textLength="58.500" lengthAdjust="spacingAndGlyphs">18.4 day(s)</text>
</g>
<path d="M726.500 253V263.500M723 260 726.500 264 730 260" fill="none" stroke="#ccc" stroke-width="1.100"/>

<!-- filters -->
<rect x="28" y="313" width="18" height="17" rx="1" fill="#4e4e4e"/>
<path d="M31 321 36 327 44.500 315" fill="none" stroke="#eee" stroke-width="1.500"/>
<path d="M374.500 339V360M374.500 339H699M374.500 384V405M374.500 384H699" stroke="#303030" fill="none"/>
<rect x="374" y="347" width="325" height="6" fill="#5c5c5c"/>
<rect x="374" y="392" width="325" height="6" fill="#5c5c5c"/>
<g fill="#c8c8c8">
<text x="53" y="325" textLength="214" lengthAdjust="spacingAndGlyphs" fill="#d4d4d4">Show only objects that can be observed</text>
<text x="110" y="352" textLength="104" lengthAdjust="spacingAndGlyphs">limiting magnitude:</text>
<text x="223" y="352" textLength="36" lengthAdjust="spacingAndGlyphs">10.7 m</text>
<text x="194" y="374" textLength="20" lengthAdjust="spacingAndGlyphs">and</text>
<text x="131" y="398" textLength="83" lengthAdjust="spacingAndGlyphs">transit altitude:</text>
<text x="223" y="398" textLength="28" lengthAdjust="spacingAndGlyphs">32.1°</text>
<text x="331" y="352" textLength="36" lengthAdjust="spacingAndGlyphs">fainter</text>
<text x="704" y="352" textLength="43" lengthAdjust="spacingAndGlyphs">brighter</text>
<text x="334" y="397" textLength="34" lengthAdjust="spacingAndGlyphs">higher</text>
<text x="704" y="397" textLength="31" lengthAdjust="spacingAndGlyphs">lower</text>
</g>
<circle cx="498" cy="350" r="8" fill="#c6c6c6"/>
<circle cx="575" cy="395" r="8" fill="#c6c6c6"/>

<!-- view toggle -->
<rect x="26" y="432" width="140" height="22" fill="#4c70ad"/>
<rect x="166" y="432" width="141" height="22" fill="#4a4e64"/>
<rect x="25.500" y="431.500" width="282" height="23" rx="3" fill="none" stroke="#b4b4b4" stroke-width="1.500"/>
<path d="M165.500 432V454" stroke="#c0c8d8" stroke-width=".8"/>
<path d="M68 435.500H124M72 439.500H124M77 443.500H124M78 447.500H124M76 451H124" stroke="#e8eef8" stroke-width="2" stroke-dasharray="7 1.800"/>
<path d="M205 435.500H216M235 435.500H241M255 435.500H272M276 435.500H278M205 440H231M235 440H242M255 440H264M276 440H278M205 444.500H218M235 444.500H243M255 444.500H264M276 444.500H278M205 449.500H216M235 449.500H253M255 449.500H272M276 449.500H278" stroke="#c4c8d4" stroke-width="1" opacity=".55"/>
<text x="71" y="468" textLength="48" lengthAdjust="spacingAndGlyphs" fill="#d4dcea">Visibility</text>
<text x="214" y="468" textLength="46" lengthAdjust="spacingAndGlyphs" fill="#d4dcea">Rise/Set</text>
<text x="516" y="444" textLength="42" lengthAdjust="spacingAndGlyphs" fill="#c8c8c8">Sort by:</text>
<rect x="568" y="431" width="208" height="23" fill="#333"/>
<text x="641" y="446" textLength="36" lengthAdjust="spacingAndGlyphs" fill="#e4e4e4">Object</text>
<path d="M750 439H766L758 446.500Z" fill="#a8a8a8"/>
</g>
<rect x="12" y="110" width="778" height="741" rx="8" fill="none" stroke="#a4a4a4" stroke-width="2"/>
</svg>
</body></html>
